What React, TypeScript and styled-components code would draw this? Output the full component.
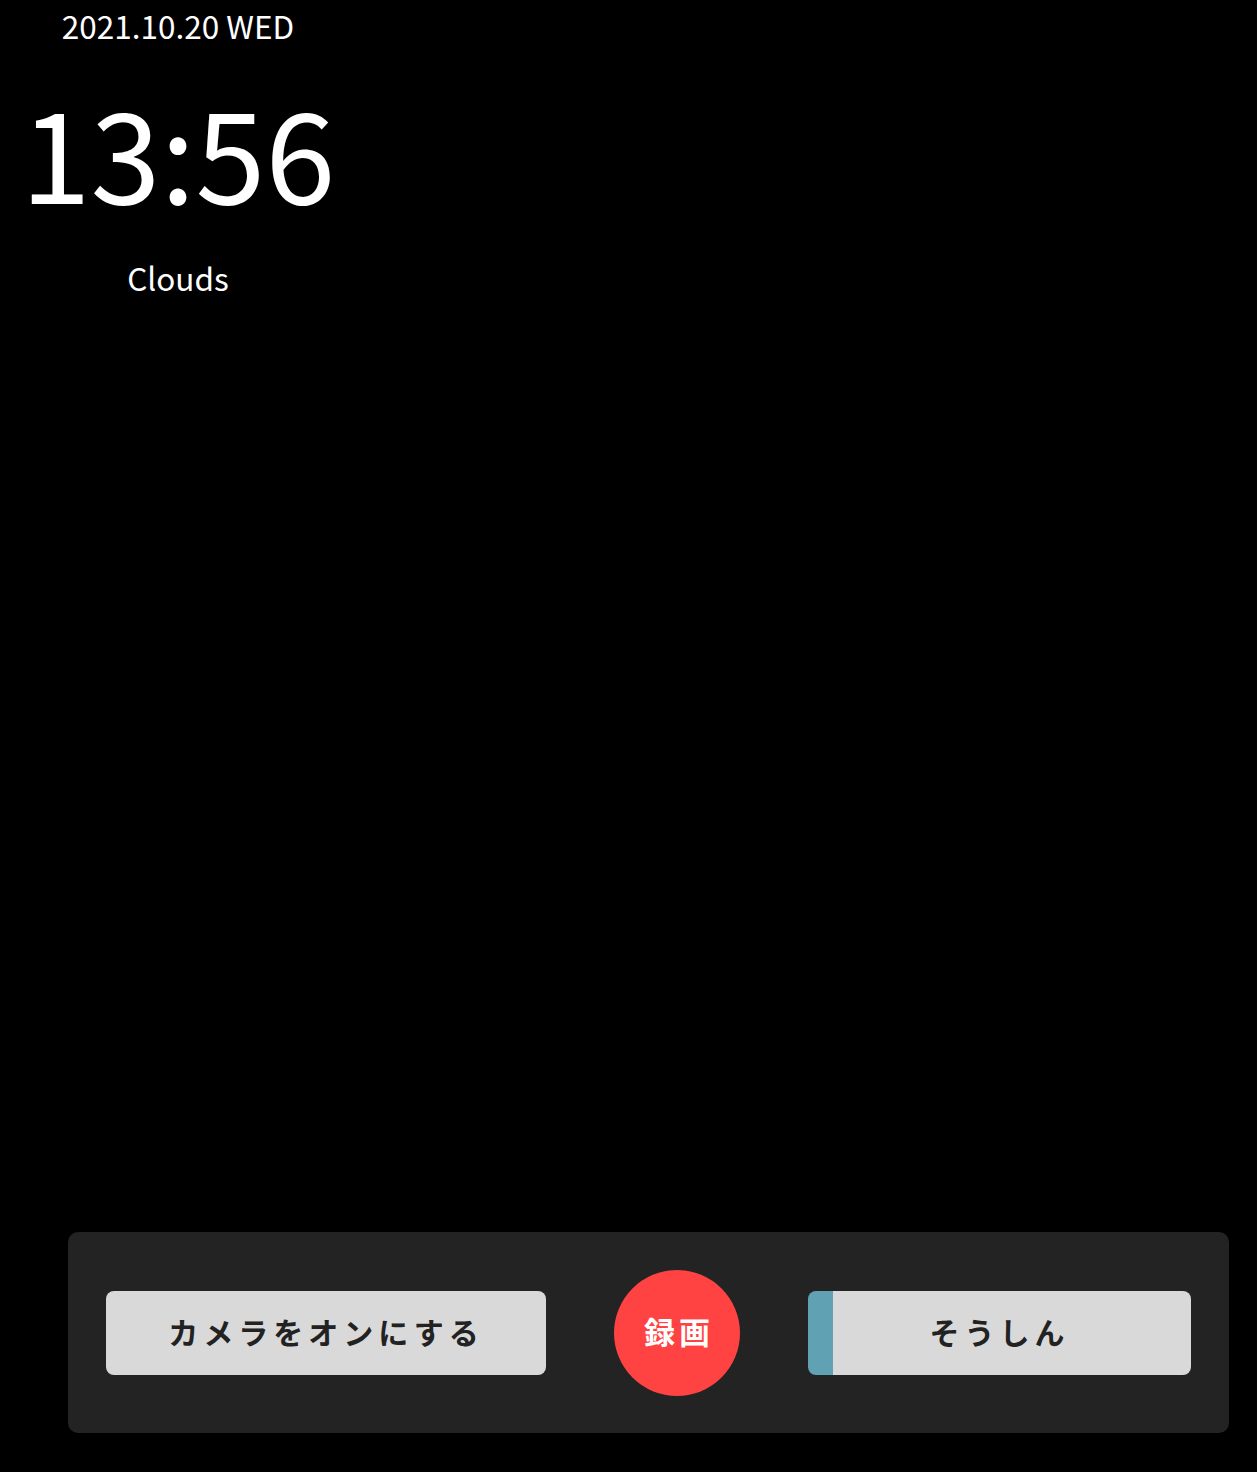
import React from 'react'
import styled, { createGlobalStyle } from 'styled-components'

const GlobalStyle = createGlobalStyle`
  html, body {
    margin: 0;
    padding: 0;
    background: #000;
  }

  body {
    font-family: "Noto Sans CJK JP", "Noto Sans", sans-serif;
    color: #fff;
  }
`

const Screen = styled.div`
  display: flex;
  flex-direction: column;
  height: 100vh;
  min-height: 1472px;
  background: #000;
`

const Clock = styled.div`
  display: flex;
  flex-direction: column;
  align-items: center;
  width: 356px;
`

const DateText = styled.div`
  margin-top: 2px;
  font-size: 31.5px;
  line-height: 46px;
`

const TimeText = styled.div`
  margin-top: 38px;
  font-size: 126px;
  line-height: 127px;
`

const Weather = styled.div`
  margin-top: 41px;
  font-size: 31.5px;
  line-height: 46px;
`

const Panel = styled.div`
  display: flex;
  align-items: center;
  justify-content: space-between;
  margin: auto 28px 39px 68px;
  height: 201px;
  padding: 0 38px;
  box-sizing: border-box;
  background: #232323;
  border-radius: 10px;
`

const Button = styled.button<{ $width: number; $accent?: string }>`
  display: flex;
  align-items: center;
  justify-content: center;
  width: ${p => p.$width}px;
  height: 84px;
  padding: 0 0 4px;
  border: none;
  border-radius: 8px;
  background: ${p =>
    p.$accent ? `linear-gradient(to right, ${p.$accent} 25px, #d9d9d9 25px)` : '#d9d9d9'};
  color: #222;
  font-family: inherit;
  font-size: 30px;
  font-weight: bold;
  letter-spacing: 5px;
  cursor: pointer;
`

const RecordButton = styled.button`
  width: 126px;
  height: 126px;
  padding: 0 0 4px 4px;
  border: none;
  border-radius: 50%;
  background: #ff4343;
  color: #fff;
  font-family: inherit;
  font-size: 31px;
  font-weight: bold;
  letter-spacing: 4px;
  cursor: pointer;
`

const App: React.FC = () => {
  return (
    <Screen>
      <GlobalStyle />
      <Clock>
        <DateText>2021.10.20 WED</DateText>
        <TimeText>13:56</TimeText>
        <Weather>Clouds</Weather>
      </Clock>
      <Panel>
        <Button $width={440}>カメラをオンにする</Button>
        <RecordButton>録画</RecordButton>
        <Button $width={383} $accent="#60a1b4">そうしん</Button>
      </Panel>
    </Screen>
  )
}

export default App
